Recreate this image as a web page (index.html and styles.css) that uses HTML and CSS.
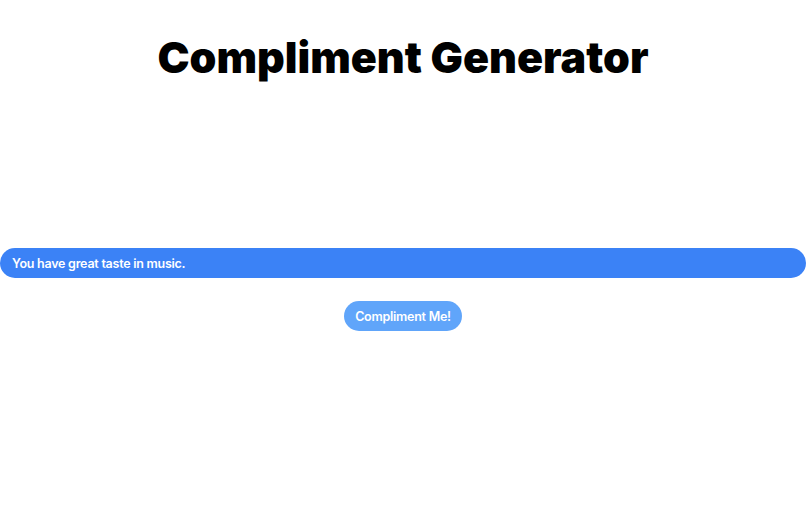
FILE: index.html
```html
<!DOCTYPE html>
<html lang="en">
<head>
    <meta charset="UTF-8">
    <meta name="viewport" content="width=device-width, initial-scale=1.0">
    <title>Compliment Generator</title>
    <link rel="stylesheet" href="styles.css">
</head>
<body>
    <div class="page">
        <h1>Compliment Generator</h1>
        <div class="content">
            <p class="compliment" id="compliment">You have great taste in music.</p>
            <button class="compliment-btn" onclick="newCompliment()">Compliment Me!</button>
        </div>
    </div>
    <script>
        const compliments = [
            "You have great taste in music.",
            "Your smile is contagious.",
            "You light up every room you walk into.",
            "You're a fantastic listener.",
            "Your creativity is inspiring.",
            "You make the world a better place."
        ];

        function newCompliment() {
            let el = document.getElementById('compliment');
            let next = el.textContent;
            while (next === el.textContent) {
                next = compliments[Math.floor(Math.random() * compliments.length)];
            }
            el.textContent = next;
        }
    </script>
</body>
</html>
```

FILE: styles.css
```css
body {
    margin: 0;
    font-family: Inter, "Noto Sans", sans-serif;
    background: #fff;
    color: #000;
}
.page {
    display: flex;
    flex-direction: column;
    align-items: center;
}
h1 {
    font-size: 43px;
    font-weight: 900;
    line-height: 1;
    margin: 36px 0 0;
}
.content {
    width: 100%;
    display: flex;
    flex-direction: column;
    align-items: center;
    gap: 23px;
    margin-top: 169px;
}
.compliment {
    box-sizing: border-box;
    width: 100%;
    height: 30px;
    margin: 0;
    padding: 0 12px;
    display: flex;
    align-items: center;
    background: #3b82f6;
    color: #fff;
    border-radius: 15px;
    font-size: 12.5px;
    font-weight: 600;
    letter-spacing: -0.25px;
}
.compliment-btn {
    height: 30px;
    padding: 0 11px;
    border: none;
    border-radius: 15px;
    background: #60a5fa;
    color: #fff;
    font-family: inherit;
    font-size: 12.5px;
    font-weight: 600;
    letter-spacing: -0.25px;
    cursor: pointer;
}
.compliment-btn:hover {
    background: #3b82f6;
}
```
